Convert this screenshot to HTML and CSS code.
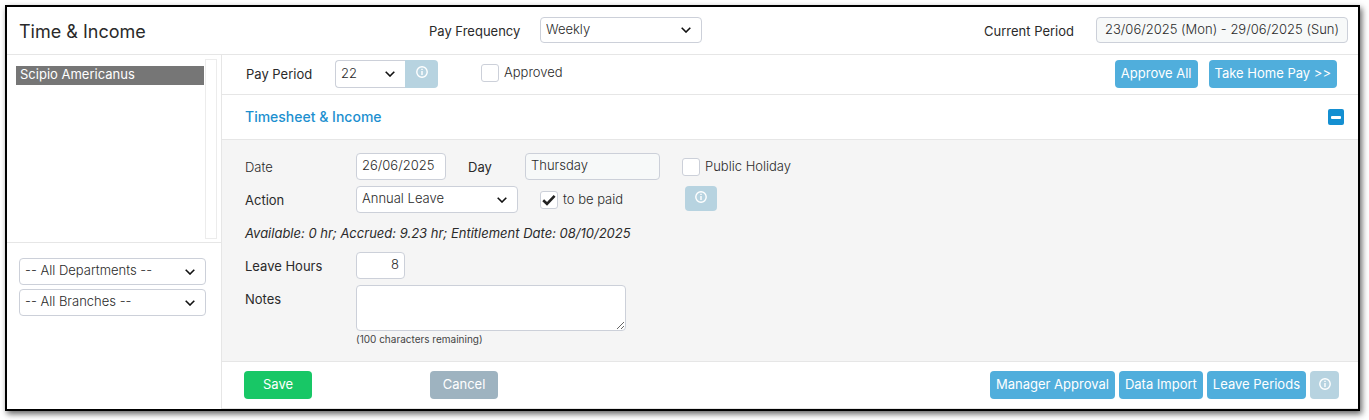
FILE: index.html
```html
<!DOCTYPE html>
<html lang="en">
<head>
<meta charset="utf-8">
<title>Time &amp; Income</title>
<link rel="stylesheet" href="styles.css">
</head>
<body>
<svg class="sprite" aria-hidden="true">
  <symbol id="info" viewBox="0 0 12 12">
    <circle cx="6" cy="6" r="5.2" fill="none" stroke="currentColor" stroke-width="1.4"/>
    <path d="M5.3 2.7h1.4v1.4H5.3zM5.3 5h1.4v4H5.3z" fill="currentColor"/>
  </symbol>
</svg>
<form class="window">
  <header class="header">
    <h1 class="title">Time &amp; Income</h1>
    <div class="pair">
      <label class="label frequency-label" for="frequency">Pay Frequency</label>
      <select class="field select wide" id="frequency"><option>Weekly</option></select>
    </div>
    <div class="pair current">
      <label class="label" for="current">Current Period</label>
      <input class="field readonly period" id="current" value="23/06/2025 (Mon) - 29/06/2025 (Sun)" readonly>
    </div>
  </header>
  <div class="body">
    <aside class="sidebar">
      <div class="people">
        <select class="list" size="9" aria-label="Employees"><option selected>Scipio Americanus</option></select>
        <div class="track"></div>
      </div>
      <div class="filters">
        <select class="field select" aria-label="Department"><option>-- All Departments --</option></select>
        <select class="field select" aria-label="Branch"><option>-- All Branches --</option></select>
      </div>
    </aside>
    <main class="main">
      <div class="toolbar">
        <label class="label pay-label" for="pay-period">Pay Period</label>
        <div class="group">
          <select class="field select number" id="pay-period"><option>22</option></select>
          <button class="info joined" type="button" aria-label="Pay period information"><svg class="icon"><use href="#info"/></svg></button>
        </div>
        <label class="check approved"><input class="box" type="checkbox"><span class="caption">Approved</span></label>
        <div class="end spaced">
          <button class="button" type="button">Approve All</button>
          <button class="button" type="button">Take Home Pay &gt;&gt;</button>
        </div>
      </div>
      <div class="section">
        <h2 class="heading">Timesheet &amp; Income</h2>
        <button class="collapse" type="button" aria-label="Collapse section"></button>
      </div>
      <div class="sheet">
        <div class="row">
          <label class="name light" for="date">Date</label>
          <input class="field date" id="date" value="26/06/2025">
          <label class="label day-label" for="day">Day</label>
          <input class="field readonly day" id="day" value="Thursday" readonly>
          <label class="check holiday"><input class="box" type="checkbox"><span class="caption">Public Holiday</span></label>
        </div>
        <div class="row">
          <label class="name" for="action">Action</label>
          <select class="field select wide" id="action"><option>Annual Leave</option></select>
          <label class="check paid"><input class="box" type="checkbox" checked><span class="caption">to be paid</span></label>
          <button class="info" type="button" aria-label="Leave information"><svg class="icon"><use href="#info"/></svg></button>
        </div>
        <p class="balance">Available: 0 hr; Accrued: 9.23 hr; Entitlement Date: 08/10/2025</p>
        <div class="row">
          <label class="name" for="hours">Leave Hours</label>
          <input class="field hours" id="hours" value="8">
        </div>
        <div class="row">
          <label class="name" for="notes">Notes</label>
          <div class="notes-cell">
            <textarea class="field notes" id="notes"></textarea>
            <small class="hint">(100 characters remaining)</small>
          </div>
        </div>
      </div>
      <footer class="footer">
        <button class="button save" type="submit">Save</button>
        <button class="button cancel" type="button">Cancel</button>
        <div class="end">
          <button class="button" type="button">Manager Approval</button>
          <button class="button" type="button">Data Import</button>
          <button class="button" type="button">Leave Periods</button>
          <button class="info tall" type="button" aria-label="Actions information"><svg class="icon"><use href="#info"/></svg></button>
        </div>
      </footer>
    </main>
  </div>
</form>
</body>
</html>
```
FILE: styles.css
```css
* { box-sizing: border-box; }
body {
  margin: 0;
  padding: 5px 9px 9px 5px;
  background: #fff;
  color: #2a2a2a;
  font: 13px/18px Inter, "Liberation Sans", sans-serif;
}
.sprite { position: absolute; width: 0; height: 0; }
.window {
  border: 2px solid #000;
  background: #fff;
  box-shadow: 2px 3px 6px rgba(0, 0, 0, .6);
}
input, select, textarea, button { margin: 0; font: inherit; color: inherit; }
h1, h2, p { margin: 0; }

.header {
  display: flex;
  align-items: flex-start;
  padding: 10px 10px 10px 12px;
  border-bottom: 1px solid #e6e6e6;
}
.title { flex: 0 0 410px; font-size: 18px; font-weight: 400; line-height: 24px; padding-top: 3px; }
.pair { display: flex; gap: 22px; }
.frequency-label { width: 89px; white-space: nowrap; }
.current { margin-left: auto; }
.label, .name { font-weight: 400; padding-top: 5px; }
.light { font-weight: 300; }

.field {
  height: 27px;
  padding: 0 5px 3px;
  border: 1px solid #ccd0d9;
  border-radius: 4px;
  background-color: #fff;
  font-weight: 300;
  outline: 0;
}
.header .field { height: 26px; }
.readonly { background-color: #f7f9f9; }
.select {
  appearance: none;
  background-image: url("data:image/svg+xml,%3Csvg xmlns='http://www.w3.org/2000/svg' width='10' height='6' viewBox='0 0 10 6'%3E%3Cpath d='M.7.7 5 5 9.3.7' fill='none' stroke='%23111' stroke-width='1.6'/%3E%3C/svg%3E");
  background-repeat: no-repeat;
  background-position: right 10px center;
}
.wide { width: 162px; }
.period { width: 252px; text-align: center; }

.body { display: flex; }
.sidebar { flex: 0 0 215px; border-right: 1px solid #e6e6e6; }
.people {
  display: flex;
  gap: 1px;
  padding: 4px 4px 3px 9px;
  border-bottom: 1px solid #e6e6e6;
}
.list {
  flex: 1;
  min-width: 0;
  height: 180px;
  padding: 7px 0 0;
  border: 0;
  background: #fff;
  outline: 0;
  overflow: hidden;
}
.list option { padding: 0 4px 1px; line-height: 18px; min-height: 19px; }
.list option:checked {
  background: #767676 linear-gradient(#767676, #767676);
  color: #fff;
  -webkit-text-fill-color: #fff;
}
.track { width: 12px; border: 1px solid #ececec; }
.filters { display: grid; gap: 4px; padding: 15px 15px 0 12px; }

.main { flex: 1; min-width: 0; }
.toolbar {
  display: flex;
  align-items: flex-start;
  padding: 5px 21px 6px 24px;
  border-bottom: 1px solid #e6e6e6;
}
.pay-label { flex: 0 0 89px; }
.group { display: flex; }
.number { width: 70px; height: 28px; border-right: 0; border-radius: 4px 0 0 4px; }
.info {
  display: grid;
  justify-items: center;
  align-content: start;
  width: 32px;
  height: 25px;
  padding: 5px 0 0;
  border: 0;
  border-radius: 4px;
  background: #b7d3e0;
  color: #fff;
}
.joined { width: 33px; height: 28px; padding-top: 6px; border-radius: 0 4px 4px 0; }
.tall { width: 29px; height: 28px; padding-top: 7px; }
.icon { display: block; width: 12px; height: 12px; }
.check { display: flex; align-items: center; gap: 5px; font-weight: 300; }
.caption { line-height: 16px; padding-bottom: 2px; }
.approved { margin: 4px 0 0 43px; }
.box {
  appearance: none;
  width: 18px;
  height: 18px;
  border: 1px solid #ccd0d9;
  border-radius: 3px;
  background: #fff no-repeat center;
}
.box:checked {
  background-image: url("data:image/svg+xml,%3Csvg xmlns='http://www.w3.org/2000/svg' width='14' height='12' viewBox='0 0 14 12'%3E%3Cpath d='M1.2 6.2 5 9.8 12.6 1.8' fill='none' stroke='%23222' stroke-width='2.6'/%3E%3C/svg%3E");
}
.end { display: flex; gap: 4px; margin-left: auto; }
.spaced { gap: 11px; }
.button {
  height: 28px;
  padding: 0 6px 3px;
  border: 0;
  border-radius: 4px;
  background: #50aedc;
  color: #fff;
  font-weight: 400;
  white-space: nowrap;
}
.section {
  display: flex;
  align-items: center;
  justify-content: space-between;
  padding: 12px 14px 12px 23px;
  border-bottom: 1px solid #e6e6e6;
}
.heading { color: #1c8fcf; font-size: 14px; font-weight: 500; line-height: 20px; }
.collapse {
  display: grid;
  place-items: center;
  width: 16px;
  height: 16px;
  padding: 0;
  border: 0;
  border-radius: 2px;
  background: #148fd1;
}
.collapse::before { content: ""; width: 10px; height: 3px; border-radius: 1px; background: #fff; }

.sheet {
  display: grid;
  gap: 6px;
  padding: 13px 23px 14px;
  border-bottom: 1px solid #e6e6e6;
  background: #f5f5f5;
}
.row { display: flex; align-items: flex-start; min-height: 27px; }
.name { flex: 0 0 111px; }
.date { width: 90px; }
.day-label { flex: 0 0 57px; margin-left: 22px; }
.day { width: 135px; }
.holiday { margin: 5px 0 0 22px; }
.paid { flex: 0 0 145px; margin: 5px 0 0 22px; }
.balance { height: 27px; padding-top: 5px; font-style: italic; }
.hours { width: 49px; text-align: right; }
.notes-cell { width: 270px; }
.notes { display: block; width: 100%; height: 46px; }
.hint { display: block; color: #444; font-size: 10px; line-height: 16px; }
.footer {
  display: flex;
  padding: 9px 19px 9px 22px;
  border-bottom: 1px solid #e6e6e6;
}
.save { width: 68px; background: #18c766; }
.cancel { width: 68px; margin-left: 118px; background: #9eb3c0; }
```
